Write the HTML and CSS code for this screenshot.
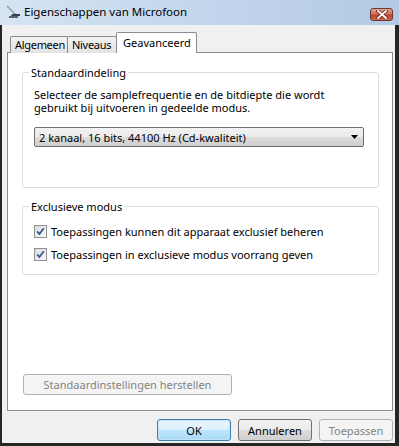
FILE: index.html
```html
<!DOCTYPE html>
<html lang="nl">
<head>
<meta charset="utf-8">
<title>Eigenschappen van Microfoon</title>
<link rel="stylesheet" href="styles.css">
</head>
<body>
<div class="window">
  <div class="titlebar">
    <svg class="appicon" width="16" height="16" viewBox="0 0 16 16">
      <path d="M2 2 L9 9" stroke="#8a9aa8" stroke-width="1.2" fill="none"/>
      <path d="M3 1.5 L5 3.5" stroke="#c8d3dc" stroke-width="1" fill="none"/>
      <path d="M6 12 C7 9 10 9 12 10 L15 10 L15 12 Z" fill="#3b3f45"/>
      <path d="M4 13 L13 13" stroke="#2a2d31" stroke-width="1.4"/>
    </svg>
    <span class="title">Eigenschappen van Microfoon</span>
    <div class="close">
      <svg width="14" height="9" viewBox="0 0 14 9">
        <path d="M3 1 L11 8 M11 1 L3 8" stroke="#6b2a20" stroke-width="3.4" stroke-linecap="square"/>
        <path d="M3 1 L11 8 M11 1 L3 8" stroke="#ffffff" stroke-width="1.8" stroke-linecap="square"/>
      </svg>
    </div>
  </div>
  <div class="client">
    <div class="tabs">
      <div class="tab">Algemeen</div>
      <div class="tab">Niveaus</div>
      <div class="tab active">Geavanceerd</div>
    </div>
    <div class="panel">
      <fieldset class="group group-format">
        <legend>Standaardindeling</legend>
        <p class="desc">Selecteer de samplefrequentie en de bitdiepte die wordt gebruikt bij uitvoeren in gedeelde modus.</p>
        <div class="select">
          <span>2 kanaal, 16 bits, 44100 Hz (Cd-kwaliteit)</span>
          <svg class="arrow" width="7" height="4" viewBox="0 0 7 4"><path d="M0 0 L7 0 L3.5 4 Z" fill="#000"/></svg>
        </div>
      </fieldset>
      <fieldset class="group group-excl">
        <legend>Exclusieve modus</legend>
        <label class="check">
          <span class="box"><svg width="11" height="11" viewBox="0 0 11 11"><path d="M2.2 5.4 L4.4 8 L8.8 2.2" stroke="#3a5796" stroke-width="1.8" fill="none"/></svg></span>
          Toepassingen kunnen dit apparaat exclusief beheren
        </label>
        <label class="check">
          <span class="box"><svg width="11" height="11" viewBox="0 0 11 11"><path d="M2.2 5.4 L4.4 8 L8.8 2.2" stroke="#3a5796" stroke-width="1.8" fill="none"/></svg></span>
          Toepassingen in exclusieve modus voorrang geven
        </label>
      </fieldset>
      <button class="btn disabled reset">Standaardinstellingen herstellen</button>
    </div>
    <div class="buttons">
      <button class="btn focus">OK</button>
      <button class="btn">Annuleren</button>
      <button class="btn disabled">Toepassen</button>
    </div>
  </div>
</div>
</body>
</html>
```
FILE: styles.css
```css
* { box-sizing: border-box; }
html, body { margin: 0; padding: 0; }
body {
  font-family: "Noto Sans", "Open Sans", sans-serif;
  font-size: 11px;
  color: #000;
  background: #f0f0f0;
}
.window {
  width: 399px;
  height: 446px;
  display: flex;
  flex-direction: column;
}
.titlebar {
  height: 25px;
  display: flex;
  align-items: center;
  padding-left: 5px;
  padding-right: 6px;
  background: linear-gradient(to right, #d6e4f3 0%, #c4d7ed 45%, #b3cae4 100%);
}
.appicon { flex: none; margin-top: -2px; }
.title {
  margin-left: 3px;
  font-size: 11.5px;
  color: #000;
  margin-top: -2px;
}
.close {
  margin-left: auto;
  width: 23px;
  height: 13px;
  margin-top: 3px;
  border: 1px solid #6d3a31;
  border-radius: 3px;
  background: linear-gradient(#e3a493 0%, #d2705a 45%, #bf3f26 55%, #cc6d50 100%);
  display: flex;
  align-items: center;
  justify-content: center;
}
.client {
  flex: 1;
  display: flex;
  flex-direction: column;
  border-left: 2px solid #262626;
  border-right: 4px solid #262626;
  border-bottom: 3px solid #262626;
  background: #f0f0f0;
}
.tabs {
  display: flex;
  align-items: flex-end;
  padding-top: 7px;
  padding-left: 8px;
  height: 28px;
  margin-bottom: -1px;
  position: relative;
  z-index: 1;
}
.tab {
  height: 17px;
  padding: 0 0 0 4px;
  white-space: nowrap;
  letter-spacing: -0.3px;
  border: 1px solid #898c95;
  border-bottom: none;
  border-radius: 2px 2px 0 0;
  background: linear-gradient(#f2f2f2, #e2e2e2);
  line-height: 16px;
  margin-right: -1px;
}
.tab:nth-child(1) { width: 58px; }
.tab:nth-child(2) { width: 50px; }
.tab.active {
  width: 81px;
  height: 21px;
  background: #fff;
  padding-left: 6px;
  letter-spacing: 0;
  line-height: 19px;
}
.panel {
  margin-left: 5px;
  margin-right: 2px;
  height: 359px;
  border: 1px solid #898c95;
  background: #fff;
  display: flex;
  flex-direction: column;
  padding-top: 13px;
}
.group {
  margin: 0 13px 0 14px;
  border: 1px solid #d5dfe5;
  border-radius: 3px;
  padding: 9px 14px 0 11px;
  min-width: 0;
}
.group legend {
  margin-left: -5px;
  padding: 0 2px;
  line-height: 13px;
}
.desc {
  margin: 0;
  line-height: 13px;
}
.group-format { padding-bottom: 40px; }
.select {
  margin-top: 13px;
  height: 20px;
  border: 1px solid #707070;
  border-radius: 2px;
  background: linear-gradient(#f2f2f2 0%, #ebebeb 50%, #dddddd 50%, #cfcfcf 100%);
  display: flex;
  align-items: center;
  padding-left: 4px;
  padding-right: 5px;
}
.select .arrow { margin-left: auto; }
.group-excl {
  margin-top: 12px;
  padding-top: 12px;
  padding-bottom: 13px;
}
.check {
  display: flex;
  align-items: center;
  gap: 4px;
  height: 13px;
  line-height: 13px;
}
.check + .check { margin-top: 10px; }
.box {
  width: 13px;
  height: 13px;
  border: 1px solid #8e8f8f;
  background: linear-gradient(135deg, #dcdcdc, #fbfbfb);
  display: flex;
  align-items: center;
  justify-content: center;
  flex: none;
}
.btn {
  font-family: inherit;
  font-size: 11px;
  color: #000;
  height: 22px;
  width: 74px;
  padding: 0;
  border: 1px solid #707070;
  border-radius: 3px;
  background: linear-gradient(#f2f2f2 0%, #ebebeb 50%, #dddddd 50%, #cfcfcf 100%);
}
.btn.focus {
  border-color: #3c7fb1;
  box-shadow: inset 0 0 0 1px #c6e4f8;
  background: linear-gradient(#eaf6fd 0%, #d9f0fc 50%, #bee6fd 50%, #a7d9f5 100%);
}
.btn.disabled {
  color: #838383;
  border-color: #adb2b5;
  background: #f4f4f4;
}
.reset {
  width: 209px;
  height: 21px;
  margin: auto 0 15px 15px;
}
.buttons {
  display: flex;
  justify-content: flex-end;
  gap: 7px;
  margin-top: 8px;
  padding-right: 2px;
}
```
